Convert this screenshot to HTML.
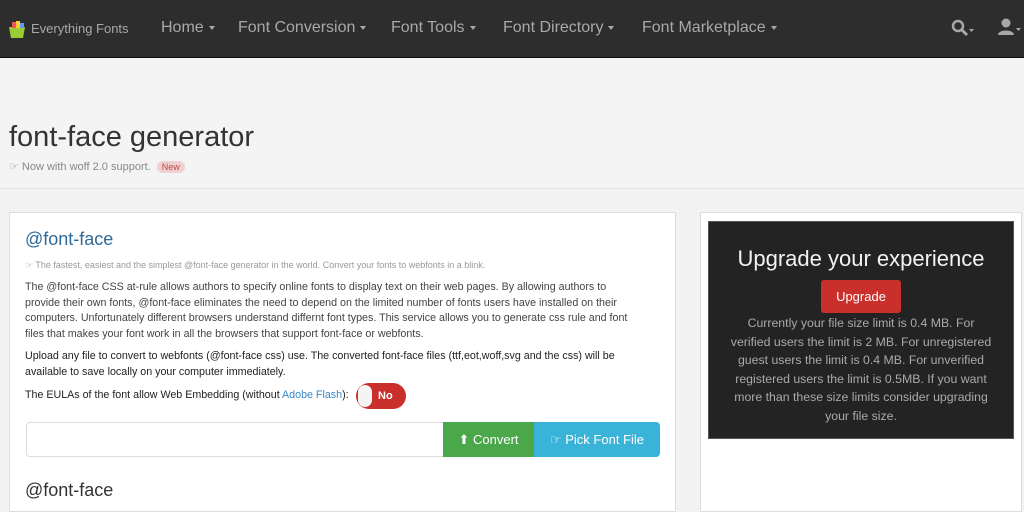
<!DOCTYPE html>
<html><head><meta charset="utf-8"><style>
*{box-sizing:border-box;margin:0;padding:0}
body{width:1024px;height:503px;overflow:hidden;background:#f2f2f2;font-family:"Liberation Sans",sans-serif;color:#333;position:relative}
.nav{position:absolute;left:0;top:0;width:1024px;height:58px;background:#2d2d2d;border-bottom:1px solid #111}
.nav span{position:absolute;top:19px;color:#a8a8a8;font-size:16px;white-space:nowrap}
.nav .car{display:inline-block;width:0;height:0;border-left:3px solid transparent;border-right:3px solid transparent;border-top:4px solid #a8a8a8;vertical-align:middle;margin-left:5px}
.hdr{position:absolute;left:0;top:59px;width:1024px;height:130px;border-bottom:1px solid #e4e4e4;background:#f4f4f4}
h1{position:absolute;left:9px;top:121px;font-size:29px;font-weight:normal;color:#333;white-space:nowrap}
.sub{position:absolute;left:9px;top:160px;font-size:11px;color:#888;white-space:nowrap}
.new{display:inline-block;background:#f0d0d0;color:#b94a48;border-radius:8px;padding:1px 5px;font-size:9px;margin-left:3px}
.lp{position:absolute;left:9px;top:212px;width:667px;height:300px;background:#fff;border:1px solid #ddd}
.rp{position:absolute;left:700px;top:212px;width:322px;height:300px;background:#fff;border:1px solid #ddd}
.dark{position:absolute;left:708px;top:221px;width:306px;height:218px;background:#232323;border:1px solid #555;text-align:center;color:#aaa}
.t{position:absolute;white-space:nowrap}
.btn{position:absolute;color:#fff;font-size:13px;text-align:center}
</style></head><body>
<div class="nav">
<svg style="position:absolute;left:8px;top:19px" width="20" height="20" viewBox="0 0 20 20"><path d="M1 8h16l-2 11H3z" fill="#9acd32"/><rect x="4" y="3" width="4" height="6" fill="#e55"/><rect x="8" y="2" width="4" height="7" fill="#fc3"/><rect x="12" y="4" width="4" height="5" fill="#69f"/></svg>
<span style="left:31px;top:21px;font-size:13px">Everything Fonts</span>
<span style="left:161px">Home<i class="car"></i></span>
<span style="left:238px">Font Conversion<i class="car"></i></span>
<span style="left:391px">Font Tools<i class="car"></i></span>
<span style="left:503px">Font Directory<i class="car"></i></span>
<span style="left:642px">Font Marketplace<i class="car"></i></span>
<svg style="position:absolute;left:950px;top:18px" width="26" height="20"><circle cx="8" cy="8" r="5" stroke="#a8a8a8" stroke-width="2.5" fill="none"/><path d="M12 12l5 5" stroke="#a8a8a8" stroke-width="3"/><path d="M19 11h5l-2.5 3z" fill="#a8a8a8"/></svg>
<svg style="position:absolute;left:997px;top:17px" width="26" height="20"><circle cx="9" cy="6" r="4.5" fill="#a8a8a8"/><path d="M1 18c0-6 16-6 16 0z" fill="#a8a8a8"/><path d="M19 11h5l-2.5 3z" fill="#a8a8a8"/></svg>
</div>
<div class="hdr"></div>
<h1>font-face generator</h1>
<div class="sub">☞ Now with woff 2.0 support. <span class="new">New</span></div>
<div class="lp"></div>
<div class="rp"></div>
<div class="t" style="left:25px;top:229px;font-size:18px;color:#2e6a9a">@font-face</div>
<div class="t" style="left:25px;top:260px;font-size:9px;color:#999">☞ The fastest, easiest and the simplest @font-face generator in the world. Convert your fonts to webfonts in a blink.</div>
<div class="t" style="left:25px;top:280px;font-size:10.7px;line-height:15.5px;color:#444">The @font-face CSS at-rule allows authors to specify online fonts to display text on their web pages. By allowing authors to<br>provide their own fonts, @font-face eliminates the need to depend on the limited number of fonts users have installed on their<br>computers. Unfortunately different browsers understand differnt font types. This service allows you to generate css rule and font<br>files that makes your font work in all the browsers that support font-face or webfonts.</div>
<div class="t" style="left:25px;top:349px;font-size:10.7px;line-height:15.5px;color:#222">Upload any file to convert to webfonts (@font-face css) use. The converted font-face files (ttf,eot,woff,svg and the css) will be<br>available to save locally on your computer immediately.</div>
<div class="t" style="left:25px;top:389px;font-size:10.7px;color:#222">The EULAs of the font allow Web Embedding (without <span style="color:#3a87c8">Adobe Flash</span>):</div>
<div style="position:absolute;left:356px;top:383px;width:50px;height:26px;border-radius:13px;background:#c9302c;color:#fff;font-size:11px;font-weight:bold;line-height:26px;padding-left:22px">No</div>
<div style="position:absolute;left:358px;top:385px;width:14px;height:22px;border-radius:7px;background:#f4f4f4"></div>
<div style="position:absolute;left:26px;top:422px;width:418px;height:35px;border:1px solid #ddd;border-radius:4px 0 0 4px;background:#fff"></div>
<div class="btn" style="left:443px;top:422px;width:91px;height:35px;background:#4aa84a;line-height:35px">⬆ Convert</div>
<div class="btn" style="left:534px;top:422px;width:126px;height:35px;background:#39b3d7;line-height:35px;border-radius:0 4px 4px 0">☞ Pick Font File</div>
<div class="t" style="left:25px;top:480px;font-size:18px;color:#333">@font-face</div>
<div class="dark">
<div style="margin-top:24px;font-size:22px;color:#f2f2f2">Upgrade your experience</div>
<div style="margin:8px auto 0;width:80px;height:33px;background:#c9302c;border-radius:3px;color:#fff;font-size:13px;line-height:33px">Upgrade</div>
<div style="margin-top:1px;font-size:12.3px;line-height:18.5px">Currently your file size limit is 0.4 MB. For<br>verified users the limit is 2 MB. For unregistered<br>guest users the limit is 0.4 MB. For unverified<br>registered users the limit is 0.5MB. If you want<br>more than these size limits consider upgrading<br>your file size.</div>
</div>
</body></html>
